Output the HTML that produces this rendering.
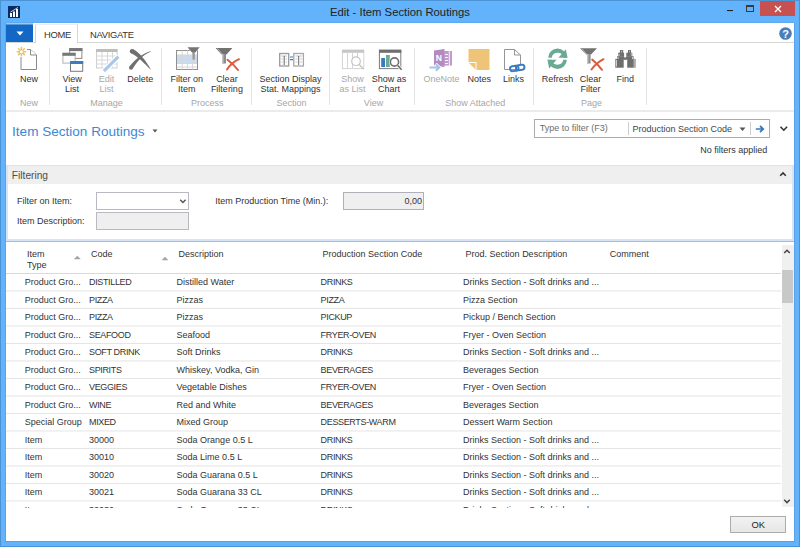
<!DOCTYPE html>
<html><head><meta charset="utf-8"><style>
html,body{margin:0;padding:0}
body{width:800px;height:547px;position:relative;overflow:hidden;background:#63B2FC;font-family:"Liberation Sans",sans-serif}
.t{position:absolute;white-space:nowrap;line-height:1}
.r{position:absolute}
</style></head><body>
<div class="r" style="left:0px;top:0px;width:800px;height:1px;background:#4C93D6"></div><div class="r" style="left:0px;top:0px;width:1px;height:547px;background:#4C93D6"></div><div class="r" style="left:799px;top:0px;width:1px;height:547px;background:#4C93D6"></div><div class="r" style="left:0px;top:546px;width:800px;height:1px;background:#4C93D6"></div><svg class="r" style="left:8px;top:5.5px" width="12" height="12" viewBox="0 0 12 12"><rect width="12" height="12" fill="#0B2A5E"/><rect x="2" y="7" width="2" height="4" fill="#fff"/><rect x="5" y="5.5" width="2" height="5.5" fill="#fff"/><rect x="8" y="3" width="2" height="8" fill="#fff"/><path d="M2.5 6 L6 4 L9 2 L10 1.5" stroke="#fff" stroke-width="0.8" fill="none"/></svg><div class="t" style="left:250.00px;width:300px;text-align:center;top:7.00px;font-size:11.3px;color:#222;">Edit - Item Section Routings</div><div class="r" style="left:727px;top:10px;width:6px;height:1px;background:#222"></div><div class="r" style="left:727px;top:11px;width:6px;height:1px;background:#7a9ccc"></div><div class="r" style="left:746px;top:5px;width:8px;height:7px;border:1px solid #3a3a3a;border-top-width:2px;box-sizing:border-box"></div><div class="r" style="left:760px;top:1px;width:35px;height:15px;background:#C75050"></div><svg class="r" style="left:772px;top:3px" width="12" height="12" viewBox="0 0 12 12"><path d="M3 3 L9 9 M9 3 L3 9" stroke="#fff" stroke-width="1.4"/></svg><div class="r" style="left:6px;top:23px;width:788px;height:518px;background:#fff"></div><div class="r" style="left:6px;top:23px;width:27px;height:1px;background:#A2C7EA"></div><div class="r" style="left:6px;top:24px;width:27px;height:1px;background:#5A97D6"></div><div class="r" style="left:6px;top:25px;width:27px;height:17px;background:#1268C4"></div><div class="r" style="left:5px;top:23px;width:1px;height:518px;background:#58A3EC"></div><div class="r" style="left:794px;top:23px;width:1px;height:518px;background:#58A3EC"></div><div class="r" style="left:6px;top:22px;width:788px;height:1px;background:#5DAAF0"></div><div class="r" style="left:5px;top:541px;width:790px;height:1px;background:#55A0E8"></div><svg class="r" style="left:16px;top:31px" width="8" height="5" viewBox="0 0 8 5"><path d="M0.5 0.5 L7.5 0.5 L4 4.5 Z" fill="#fff"/></svg><div class="r" style="left:6px;top:42px;width:788px;height:1px;background:#D6D6D6"></div><div class="r" style="left:35px;top:24px;width:43px;height:19px;background:#fff;border:1px solid #D6D6D6;border-top-color:#EDEDED;border-bottom:none;box-sizing:border-box"></div><div class="t" style="left:44.00px;top:30.00px;font-size:9.4px;color:#333;letter-spacing:-0.25px">HOME</div><div class="t" style="left:90.00px;top:30.00px;font-size:9.4px;color:#333;letter-spacing:-0.3px">NAVIGATE</div><svg class="r" style="left:779px;top:27px" width="13" height="13" viewBox="0 0 13 13"><circle cx="6.5" cy="6.5" r="6.3" fill="#4A7EB8"/><text x="6.5" y="10.6" font-family="Liberation Sans" font-weight="bold" font-size="11" fill="#fff" text-anchor="middle">?</text></svg><div class="r" style="left:6px;top:110px;width:788px;height:2px;background:#EBEBEB"></div><div class="r" style="left:49px;top:48px;width:1px;height:57px;background:#E3E3E3"></div><div class="r" style="left:161px;top:48px;width:1px;height:57px;background:#E3E3E3"></div><div class="r" style="left:251px;top:48px;width:1px;height:57px;background:#E3E3E3"></div><div class="r" style="left:329px;top:48px;width:1px;height:57px;background:#E3E3E3"></div><div class="r" style="left:414px;top:48px;width:1px;height:57px;background:#E3E3E3"></div><div class="r" style="left:533px;top:48px;width:1px;height:57px;background:#E3E3E3"></div><div class="r" style="left:646px;top:48px;width:1px;height:57px;background:#E3E3E3"></div><div class="t" style="left:-10.90px;width:80px;text-align:center;top:75.00px;font-size:9px;color:#333;">New</div><div class="t" style="left:32.10px;width:80px;text-align:center;top:75.00px;font-size:9px;color:#333;">View</div><div class="t" style="left:32.10px;width:80px;text-align:center;top:85.00px;font-size:9px;color:#333;">List</div><div class="t" style="left:66.60px;width:80px;text-align:center;top:75.00px;font-size:9px;color:#A8A8A8;">Edit</div><div class="t" style="left:66.60px;width:80px;text-align:center;top:85.00px;font-size:9px;color:#A8A8A8;">List</div><div class="t" style="left:100.20px;width:80px;text-align:center;top:75.00px;font-size:9px;color:#333;">Delete</div><div class="t" style="left:146.75px;width:80px;text-align:center;top:75.00px;font-size:9px;color:#333;">Filter on</div><div class="t" style="left:146.75px;width:80px;text-align:center;top:85.00px;font-size:9px;color:#333;">Item</div><div class="t" style="left:186.90px;width:80px;text-align:center;top:75.00px;font-size:9px;color:#333;">Clear</div><div class="t" style="left:186.90px;width:80px;text-align:center;top:85.00px;font-size:9px;color:#333;">Filtering</div><div class="t" style="left:250.50px;width:80px;text-align:center;top:75.00px;font-size:9px;color:#333;">Section Display</div><div class="t" style="left:250.50px;width:80px;text-align:center;top:85.00px;font-size:9px;color:#333;">Stat. Mappings</div><div class="t" style="left:312.50px;width:80px;text-align:center;top:75.00px;font-size:9px;color:#A8A8A8;">Show</div><div class="t" style="left:312.50px;width:80px;text-align:center;top:85.00px;font-size:9px;color:#A8A8A8;">as List</div><div class="t" style="left:349.10px;width:80px;text-align:center;top:75.00px;font-size:9px;color:#333;">Show as</div><div class="t" style="left:349.10px;width:80px;text-align:center;top:85.00px;font-size:9px;color:#333;">Chart</div><div class="t" style="left:401.50px;width:80px;text-align:center;top:75.00px;font-size:9px;color:#A8A8A8;">OneNote</div><div class="t" style="left:439.30px;width:80px;text-align:center;top:75.00px;font-size:9px;color:#333;">Notes</div><div class="t" style="left:473.50px;width:80px;text-align:center;top:75.00px;font-size:9px;color:#333;">Links</div><div class="t" style="left:517.50px;width:80px;text-align:center;top:75.00px;font-size:9px;color:#333;">Refresh</div><div class="t" style="left:550.60px;width:80px;text-align:center;top:75.00px;font-size:9px;color:#333;">Clear</div><div class="t" style="left:550.60px;width:80px;text-align:center;top:85.00px;font-size:9px;color:#333;">Filter</div><div class="t" style="left:585.30px;width:80px;text-align:center;top:75.00px;font-size:9px;color:#333;">Find</div><div class="t" style="left:-15.90px;width:90px;text-align:center;top:99.00px;font-size:9px;color:#A6A6A6;">New</div><div class="t" style="left:61.50px;width:90px;text-align:center;top:99.00px;font-size:9px;color:#A6A6A6;">Manage</div><div class="t" style="left:162.30px;width:90px;text-align:center;top:99.00px;font-size:9px;color:#A6A6A6;">Process</div><div class="t" style="left:246.50px;width:90px;text-align:center;top:99.00px;font-size:9px;color:#A6A6A6;">Section</div><div class="t" style="left:328.50px;width:90px;text-align:center;top:99.00px;font-size:9px;color:#A6A6A6;">View</div><div class="t" style="left:430.30px;width:90px;text-align:center;top:99.00px;font-size:9px;color:#A6A6A6;">Show Attached</div><div class="t" style="left:546.40px;width:90px;text-align:center;top:99.00px;font-size:9px;color:#A6A6A6;">Page</div><svg class="r" style="left:16px;top:46px" width="22" height="25" viewBox="0 0 22 25"><path d="M5 3.5 H14.5 L20.5 9 V23.5 H5 Z" fill="#fff" stroke="#8a8a8a" stroke-width="1"/><path d="M14.5 3.5 V9 H20.5" fill="#fff" stroke="#8a8a8a" stroke-width="1"/><rect x="0" y="0" width="11" height="11" fill="#fff"/><g stroke="#EBC060" stroke-width="1.5" stroke-linecap="round"><path d="M5.4 1.6 V9.8 M1.3 5.7 H9.5 M2.5 2.8 L8.3 8.6 M8.3 2.8 L2.5 8.6"/></g><circle cx="5.4" cy="5.7" r="1.5" fill="#fff"/></svg><svg class="r" style="left:60px;top:46px" width="26" height="28" viewBox="0 0 26 28"><rect x="9.7" y="2.6" width="12.2" height="9.8" fill="#fff" stroke="#8a8a8a"/><rect x="9.2" y="2.1" width="13.2" height="3" fill="#777"/><rect x="2.9" y="7.3" width="12.2" height="9.8" fill="#fff" stroke="#b0b0b0"/><rect x="2.4" y="6.8" width="13.2" height="3" fill="#777"/><rect x="10.5" y="15.5" width="12.2" height="9.8" fill="#fff" stroke="#7a7a7a"/><rect x="10" y="15" width="13.2" height="3" fill="#3F7BBE"/></svg><svg class="r" style="left:94px;top:47px" width="27" height="27" viewBox="0 0 27 27"><rect x="2.5" y="2.5" width="20.5" height="18.5" fill="#fff" stroke="#cfcfcf"/><rect x="2" y="2" width="21.5" height="3" fill="#BDBDBD"/><path d="M2.5 9 H23 M2.5 13 H23 M2.5 17 H23 M8 5 V21 M13.5 5 V21 M18.5 5 V21" stroke="#d8d8d8" stroke-width="1" fill="none"/><path d="M10 24 L24.5 9.5" stroke="#fff" stroke-width="5.5"/><path d="M9.8 24.2 L24.3 9.7" stroke="#A9C8E8" stroke-width="3.2"/><path d="M9.1 23.4 L10.6 24.9 L8.6 25.6 Z" fill="#fff"/></svg><svg class="r" style="left:126px;top:46px" width="30" height="26" viewBox="0 0 30 26"><path d="M5.09 7.20 L5.62 7.46 L6.18 7.75 L6.76 8.08 L7.37 8.44 L8.00 8.84 L8.65 9.28 L9.33 9.75 L10.03 10.26 L10.75 10.81 L11.50 11.39 L12.27 12.01 L13.06 12.67 L13.87 13.36 L14.71 14.10 L15.57 14.87 L16.45 15.67 L17.35 16.52 L18.28 17.40 L19.23 18.31 L20.20 19.27 L21.19 20.26 L22.20 21.28 L23.24 22.35 L24.30 23.45 L24.70 23.15 L23.91 21.83 L23.13 20.56 L22.35 19.32 L21.58 18.13 L20.81 16.99 L20.05 15.88 L19.29 14.82 L18.53 13.79 L17.78 12.82 L17.03 11.88 L16.28 10.98 L15.54 10.13 L14.80 9.32 L14.07 8.55 L13.34 7.83 L12.62 7.14 L11.89 6.50 L11.17 5.90 L10.46 5.34 L9.74 4.83 L9.03 4.35 L8.32 3.93 L7.62 3.54 L6.91 3.20 Z" fill="#707070"/><circle cx="6" cy="5.2" r="2.2" fill="#707070"/><path d="M24.71 5.21 L23.80 5.48 L22.89 5.77 L21.99 6.09 L21.08 6.45 L20.17 6.83 L19.27 7.24 L18.37 7.69 L17.46 8.17 L16.56 8.69 L15.66 9.23 L14.77 9.82 L13.87 10.43 L12.98 11.09 L12.09 11.77 L11.20 12.49 L10.32 13.25 L9.44 14.04 L8.56 14.86 L7.69 15.72 L6.81 16.62 L5.95 17.55 L5.08 18.51 L4.22 19.51 L3.37 20.55 L6.63 22.85 L7.30 21.77 L7.97 20.72 L8.65 19.70 L9.34 18.71 L10.04 17.76 L10.74 16.84 L11.45 15.94 L12.17 15.09 L12.90 14.26 L13.63 13.46 L14.37 12.70 L15.13 11.97 L15.89 11.27 L16.66 10.60 L17.44 9.96 L18.23 9.36 L19.02 8.79 L19.83 8.26 L20.65 7.76 L21.48 7.29 L22.31 6.86 L23.16 6.46 L24.02 6.10 L24.89 5.79 Z" fill="#707070"/><circle cx="5" cy="21.7" r="2" fill="#707070"/></svg><svg class="r" style="left:174px;top:45px" width="28" height="27" viewBox="0 0 28 27"><rect x="2.5" y="5.5" width="21" height="19" fill="#fff" stroke="#8f8f8f"/><rect x="3" y="10" width="20" height="8.5" fill="#C9DCF0"/><path d="M3 10 H23 M3 14.2 H23 M3 18.5 H23 M3 22 H23 M8.2 5.5 V24.5 M13.4 5.5 V24.5 M18.6 5.5 V24.5" stroke="#d6d6d6" stroke-width="1"/><path d="M13 2 H26 L21 8.5 V14.5 H18 V8.5 Z" fill="#fff"/><path d="M13.5 2.3 H25.7 L21 7.8 H18.2 Z" fill="#747474"/><rect x="18.3" y="7.5" width="2.6" height="7.2" fill="#9a9a9a"/></svg><svg class="r" style="left:214px;top:46px" width="28" height="26" viewBox="0 0 28 26"><path d="M1.6 2 H18.4 L12.5 8.5 H7.5 Z" fill="#727272"/><path d="M3.5 2.5 L8.5 8.5" stroke="#bdbdbd" stroke-width="0.8"/><rect x="8" y="8" width="4" height="9.5" fill="#8e8e8e"/><rect x="8" y="8" width="1.5" height="9.5" fill="#c4c4c4"/><path d="M13 23.5 C16 19 20 15.5 25 13.2 M13.5 13.8 C17 16.5 21 20 24 24" stroke="#DA5B3E" stroke-width="2" fill="none" stroke-linecap="round"/></svg><svg class="r" style="left:277px;top:51px" width="30" height="17" viewBox="0 0 30 17"><rect x="2.7" y="2.5" width="9" height="12.5" fill="#fff" stroke="#9a9a9a" stroke-width="1.3"/><rect x="16.8" y="2.5" width="9.6" height="12.5" fill="#fff" stroke="#a8a8a8" stroke-width="1.3"/><path d="M4.3 5 H10 M18.5 5 H25" stroke="#bbb" stroke-width="0.9"/><path d="M7.2 5 V14 M21.7 5 V14" stroke="#666" stroke-width="1"/><path d="M4.3 8 H6 M8.5 8 H10 M18.5 8 H20.5 M23 8 H25 M4.3 11 H6 M8.5 11 H10 M18.5 11 H20.5 M23 11 H25" stroke="#bbb" stroke-width="0.8"/><path d="M13 6 H16 M13 8.6 H16" stroke="#3B7DC4" stroke-width="1.2"/></svg><svg class="r" style="left:340px;top:48px" width="27" height="24" viewBox="0 0 27 24"><rect x="2.4" y="2.2" width="21.4" height="18.4" fill="#fff" stroke="#d4d4d4"/><rect x="2" y="1.8" width="22" height="3" fill="#C6C6C6"/><path d="M7.5 4.5 V20.5 M12.5 4.5 V20.5 M17.5 4.5 V13" stroke="#d4d4d4"/><circle cx="16" cy="13.2" r="4.3" fill="#fff" stroke="#c4c4c4" stroke-width="1.2"/><path d="M19.2 16.5 L23.5 21" stroke="#c4c4c4" stroke-width="1.4"/></svg><svg class="r" style="left:377px;top:48px" width="27" height="25" viewBox="0 0 27 25"><rect x="2.4" y="2.2" width="21.4" height="18.4" fill="#fff" stroke="#7c7c7c"/><rect x="2" y="1.8" width="22.3" height="3" fill="#6f6f6f"/><rect x="4.2" y="10" width="3.8" height="9" fill="#3D79BE"/><rect x="9" y="7" width="3.8" height="12" fill="#6BAA94"/><circle cx="17.5" cy="14" r="5.3" fill="#fff"/><circle cx="17.5" cy="14" r="4.1" fill="#fff" stroke="#707070" stroke-width="1.6"/><path d="M20.6 17.3 L24.6 21.8" stroke="#fff" stroke-width="3"/><path d="M20.6 17.3 L24.6 21.8" stroke="#707070" stroke-width="1.7"/></svg><svg class="r" style="left:428px;top:47px" width="27" height="26" viewBox="0 0 27 26"><path d="M6 3.6 L16.5 2 V20 L6 18.5 Z" fill="#B48AC1"/><rect x="16" y="4" width="8" height="14.5" fill="#BE9BCB"/><path d="M17 7.5 H20 M17 10.5 H20 M17 13.5 H20 M17 16.5 H20 M21.3 4 V18.5" stroke="#fff" stroke-width="0.9"/><text x="10.8" y="13.6" font-family="Liberation Sans" font-weight="bold" font-size="8.6" fill="#fff" text-anchor="middle">N</text><path d="M1.5 20.5 H11 M7.5 17 L11.2 20.5 L7.5 24" stroke="#fff" stroke-width="3.5" fill="none"/><path d="M1.5 20.5 H11 M7.8 17.3 L11.2 20.5 L7.8 23.7" stroke="#A3C5E5" stroke-width="2" fill="none"/></svg><svg class="r" style="left:466px;top:47px" width="26" height="25" viewBox="0 0 26 25"><path d="M2.5 2 H23.5 V23 H10.5 L2.5 15 Z" fill="#EEC479"/><path d="M2.5 15.5 H10 V23 Z" fill="#EEC479"/><path d="M2.5 15.5 H10 V23" stroke="#fff" stroke-width="1" fill="none"/></svg><svg class="r" style="left:502px;top:47px" width="25" height="26" viewBox="0 0 25 26"><path d="M2.5 2.5 H12.5 L18.5 8 V22.5 H2.5 Z" fill="#fff" stroke="#959595"/><path d="M12.5 2.5 V8 H18.5" fill="none" stroke="#959595"/><rect x="16" y="17" width="8" height="7" fill="#fff"/><g transform="rotate(-7 15 21)"><rect x="8" y="18.6" width="8.5" height="5" rx="2.5" fill="none" stroke="#3D7CC1" stroke-width="2"/><rect x="14" y="18.4" width="8.5" height="5" rx="2.5" fill="none" stroke="#3D7CC1" stroke-width="2"/></g></svg><svg class="r" style="left:544px;top:46px" width="28" height="26" viewBox="0 0 28 26"><path d="M4.2 11.7 A9.3 9.3 0 0 1 22.8 11.7 L19.5 11.7 A6 6 0 0 0 7.7 11.7 Z" fill="#6AAA94"/><path d="M21.8 3.2 L23.6 11.7 H14.5 Z" fill="#6AAA94"/><path d="M22.8 13.8 A9.3 9.3 0 0 1 4.2 13.8 L7.5 13.8 A6 6 0 0 0 19.3 13.8 Z" fill="#6AAA94"/><path d="M5.2 22.6 L3.4 13.8 H12.5 Z" fill="#6AAA94"/></svg><svg class="r" style="left:578px;top:46px" width="28" height="26" viewBox="0 0 28 26"><path d="M2 2.2 H19 L13 8.5 H8.5 Z" fill="#727272"/><path d="M4 2.8 L9 8.5" stroke="#bdbdbd" stroke-width="0.8"/><rect x="9" y="8" width="3.6" height="9.5" fill="#8e8e8e"/><rect x="9" y="8" width="1.4" height="9.5" fill="#c4c4c4"/><path d="M13.5 23.5 C16.5 19.5 20 16 25.5 13.2 M14.2 13.6 C17.5 16.5 21 20 24 23.8" stroke="#DA5B3E" stroke-width="2" fill="none" stroke-linecap="round"/></svg><svg class="r" style="left:612px;top:46px" width="28" height="26" viewBox="0 0 28 26"><g fill="#6e6e6e"><rect x="7.9" y="4" width="3.3" height="5"/><rect x="6.2" y="6.7" width="5.9" height="3.8"/><rect x="5.1" y="10.2" width="7" height="3"/><rect x="3.3" y="12.9" width="8.4" height="8.8"/><rect x="16" y="4" width="3" height="5"/><rect x="14.3" y="6.7" width="6" height="3.8"/><rect x="14.3" y="10.2" width="7.3" height="3"/><rect x="15.2" y="12.9" width="8.6" height="8.8"/><rect x="11.5" y="11.4" width="3.5" height="2.4"/></g><g fill="#fff" fill-opacity="0.75"><rect x="3.9" y="14" width="1" height="6.5"/><rect x="6.6" y="8" width="0.9" height="2"/><rect x="5.6" y="11" width="0.9" height="2"/><rect x="9.3" y="4.8" width="0.7" height="1.6"/><rect x="17.2" y="4.8" width="0.7" height="1.6"/><rect x="20" y="11" width="0.9" height="2"/></g><rect x="21.5" y="13" width="2.3" height="8.7" fill="#fff" fill-opacity="0.45"/><rect x="18.8" y="7" width="1.5" height="3" fill="#fff" fill-opacity="0.4"/></svg><div class="t" style="left:12.10px;top:125.00px;font-size:13.55px;color:#3B88D5;">Item Section Routings</div><svg class="r" style="left:152px;top:129px" width="6" height="4" viewBox="0 0 6 4"><path d="M0.5 0.5 H5.5 L3 3.5 Z" fill="#555"/></svg><div class="r" style="left:534px;top:119px;width:236px;height:19px;border:1px solid #ABABAB;box-sizing:border-box;background:#fff"></div><div class="t" style="left:539.70px;top:124.00px;font-size:9px;color:#6D6D6D;">Type to filter (F3)</div><div class="r" style="left:628px;top:122px;width:1px;height:13px;background:#CFCFCF"></div><div class="t" style="left:632.40px;top:125.00px;font-size:9px;color:#444;">Production Section Code</div><svg class="r" style="left:739px;top:127px" width="7" height="5" viewBox="0 0 7 5"><path d="M0.5 0.5 H6.5 L3.5 4 Z" fill="#555"/></svg><div class="r" style="left:750px;top:122px;width:1px;height:13px;background:#CFCFCF"></div><svg class="r" style="left:755px;top:125px" width="10" height="8" viewBox="0 0 10 8"><path d="M0.8 4 H8 M5 1 L8.3 4 L5 7" stroke="#3A78BE" stroke-width="1.7" fill="none"/></svg><svg class="r" style="left:779px;top:125px" width="10" height="8" viewBox="0 0 10 8"><path d="M1.5 1.8 L4.8 5.2 L8.1 1.8" stroke="#333" stroke-width="1.6" fill="none"/></svg><div class="t" style="left:647.40px;width:120px;text-align:right;top:146.00px;font-size:9px;color:#333;">No filters applied</div><div class="r" style="left:6px;top:165px;width:788px;height:76px;border:1px solid #D6E4F8;border-left-width:2px;border-right-width:2px;border-bottom-width:2px;box-sizing:border-box"></div><div class="r" style="left:6px;top:241px;width:788px;height:1px;background:#B4B9C2"></div><div class="r" style="left:8px;top:166px;width:784px;height:18px;background:#EFEFEF"></div><div class="t" style="left:11.80px;top:171.00px;font-size:10.2px;color:#4D4D4D;">Filtering</div><svg class="r" style="left:779px;top:171px" width="8" height="6" viewBox="0 0 8 6"><path d="M1.2 4.8 L4 2 L6.8 4.8" stroke="#333" stroke-width="1.6" fill="none"/></svg><div class="t" style="left:17.00px;top:197.00px;font-size:9px;color:#333;">Filter on Item:</div><div class="t" style="left:17.00px;top:217.00px;font-size:9px;color:#333;">Item Description:</div><div class="r" style="left:96px;top:192px;width:93px;height:18px;border:1px solid #B9B9C1;box-sizing:border-box;background:#fff"></div><svg class="r" style="left:179px;top:198px" width="8" height="7" viewBox="0 0 8 7"><path d="M1.2 1.8 L3.9 4.5 L6.6 1.8" stroke="#555" stroke-width="1.5" fill="none"/></svg><div class="r" style="left:96px;top:212px;width:93px;height:18px;border:1px solid #B9B9C1;box-sizing:border-box;background:#EFEFEF"></div><div class="t" style="left:215.20px;top:197.00px;font-size:9px;color:#333;">Item Production Time (Min.):</div><div class="r" style="left:343px;top:192px;width:81px;height:18px;border:1px solid #B0B0B8;box-sizing:border-box;background:#EFEFEF"></div><div class="t" style="left:362.00px;width:60px;text-align:right;top:197.00px;font-size:9px;color:#333;">0,00</div><div class="t" style="left:26.90px;top:250.00px;font-size:9px;color:#333;">Item</div><div class="t" style="left:91.00px;top:250.00px;font-size:9px;color:#333;">Code</div><div class="t" style="left:178.60px;top:250.00px;font-size:9px;color:#333;">Description</div><div class="t" style="left:322.60px;top:250.00px;font-size:9px;color:#333;">Production Section Code</div><div class="t" style="left:465.60px;top:250.00px;font-size:9px;color:#333;">Prod. Section Description</div><div class="t" style="left:609.80px;top:250.00px;font-size:9px;color:#333;">Comment</div><div class="t" style="left:26.90px;top:261.00px;font-size:9px;color:#333;">Type</div><svg class="r" style="left:73px;top:255px" width="9" height="5" viewBox="0 0 9 5"><path d="M0.8 4.3 H7.8 L4.3 0.8 Z" fill="#A4A4A4"/></svg><svg class="r" style="left:161px;top:256px" width="8" height="5" viewBox="0 0 8 5"><path d="M0.6 4.3 H7.4 L4 0.8 Z" fill="#A4A4A4"/></svg><div class="r" style="left:6px;top:273px;width:775px;height:1px;background:#D9D9D9"></div><div class="r" style="left:6px;top:274px;width:776px;height:233.5px;overflow:hidden"><div class="t" style="left:18.75px;top:4.00px;font-size:9px;color:#333;">Product Gro...</div><div class="t" style="left:83.00px;top:4.00px;font-size:9px;color:#333;letter-spacing:-0.35px">DISTILLED</div><div class="t" style="left:170.60px;top:4.00px;font-size:9px;color:#333;">Distilled Water</div><div class="t" style="left:314.60px;top:4.00px;font-size:9px;color:#333;letter-spacing:-0.35px">DRINKS</div><div class="t" style="left:456.90px;top:4.00px;font-size:9px;color:#333;">Drinks Section - Soft drinks and ...</div><div class="t" style="left:18.75px;top:22.00px;font-size:9px;color:#333;">Product Gro...</div><div class="t" style="left:83.00px;top:22.00px;font-size:9px;color:#333;letter-spacing:-0.35px">PIZZA</div><div class="t" style="left:170.60px;top:22.00px;font-size:9px;color:#333;">Pizzas</div><div class="t" style="left:314.60px;top:22.00px;font-size:9px;color:#333;letter-spacing:-0.35px">PIZZA</div><div class="t" style="left:456.90px;top:22.00px;font-size:9px;color:#333;">Pizza Section</div><div class="t" style="left:18.75px;top:39.00px;font-size:9px;color:#333;">Product Gro...</div><div class="t" style="left:83.00px;top:39.00px;font-size:9px;color:#333;letter-spacing:-0.35px">PIZZA</div><div class="t" style="left:170.60px;top:39.00px;font-size:9px;color:#333;">Pizzas</div><div class="t" style="left:314.60px;top:39.00px;font-size:9px;color:#333;letter-spacing:-0.35px">PICKUP</div><div class="t" style="left:456.90px;top:39.00px;font-size:9px;color:#333;">Pickup / Bench Section</div><div class="t" style="left:18.75px;top:57.00px;font-size:9px;color:#333;">Product Gro...</div><div class="t" style="left:83.00px;top:57.00px;font-size:9px;color:#333;letter-spacing:-0.35px">SEAFOOD</div><div class="t" style="left:170.60px;top:57.00px;font-size:9px;color:#333;">Seafood</div><div class="t" style="left:314.60px;top:57.00px;font-size:9px;color:#333;letter-spacing:-0.35px">FRYER-OVEN</div><div class="t" style="left:456.90px;top:57.00px;font-size:9px;color:#333;">Fryer - Oven Section</div><div class="t" style="left:18.75px;top:74.00px;font-size:9px;color:#333;">Product Gro...</div><div class="t" style="left:83.00px;top:74.00px;font-size:9px;color:#333;letter-spacing:-0.35px">SOFT DRINK</div><div class="t" style="left:170.60px;top:74.00px;font-size:9px;color:#333;">Soft Drinks</div><div class="t" style="left:314.60px;top:74.00px;font-size:9px;color:#333;letter-spacing:-0.35px">DRINKS</div><div class="t" style="left:456.90px;top:74.00px;font-size:9px;color:#333;">Drinks Section - Soft drinks and ...</div><div class="t" style="left:18.75px;top:92.00px;font-size:9px;color:#333;">Product Gro...</div><div class="t" style="left:83.00px;top:92.00px;font-size:9px;color:#333;letter-spacing:-0.35px">SPIRITS</div><div class="t" style="left:170.60px;top:92.00px;font-size:9px;color:#333;">Whiskey, Vodka, Gin</div><div class="t" style="left:314.60px;top:92.00px;font-size:9px;color:#333;letter-spacing:-0.35px">BEVERAGES</div><div class="t" style="left:456.90px;top:92.00px;font-size:9px;color:#333;">Beverages Section</div><div class="t" style="left:18.75px;top:109.00px;font-size:9px;color:#333;">Product Gro...</div><div class="t" style="left:83.00px;top:109.00px;font-size:9px;color:#333;letter-spacing:-0.35px">VEGGIES</div><div class="t" style="left:170.60px;top:109.00px;font-size:9px;color:#333;">Vegetable Dishes</div><div class="t" style="left:314.60px;top:109.00px;font-size:9px;color:#333;letter-spacing:-0.35px">FRYER-OVEN</div><div class="t" style="left:456.90px;top:109.00px;font-size:9px;color:#333;">Fryer - Oven Section</div><div class="t" style="left:18.75px;top:127.00px;font-size:9px;color:#333;">Product Gro...</div><div class="t" style="left:83.00px;top:127.00px;font-size:9px;color:#333;letter-spacing:-0.35px">WINE</div><div class="t" style="left:170.60px;top:127.00px;font-size:9px;color:#333;">Red and White</div><div class="t" style="left:314.60px;top:127.00px;font-size:9px;color:#333;letter-spacing:-0.35px">BEVERAGES</div><div class="t" style="left:456.90px;top:127.00px;font-size:9px;color:#333;">Beverages Section</div><div class="t" style="left:18.75px;top:144.00px;font-size:9px;color:#333;">Special Group</div><div class="t" style="left:83.00px;top:144.00px;font-size:9px;color:#333;letter-spacing:-0.35px">MIXED</div><div class="t" style="left:170.60px;top:144.00px;font-size:9px;color:#333;">Mixed Group</div><div class="t" style="left:314.60px;top:144.00px;font-size:9px;color:#333;letter-spacing:-0.35px">DESSERTS-WARM</div><div class="t" style="left:456.90px;top:144.00px;font-size:9px;color:#333;">Dessert Warm Section</div><div class="t" style="left:18.75px;top:162.00px;font-size:9px;color:#333;">Item</div><div class="t" style="left:83.00px;top:162.00px;font-size:9px;color:#333;">30000</div><div class="t" style="left:170.60px;top:162.00px;font-size:9px;color:#333;">Soda Orange 0.5 L</div><div class="t" style="left:314.60px;top:162.00px;font-size:9px;color:#333;letter-spacing:-0.35px">DRINKS</div><div class="t" style="left:456.90px;top:162.00px;font-size:9px;color:#333;">Drinks Section - Soft drinks and ...</div><div class="t" style="left:18.75px;top:179.00px;font-size:9px;color:#333;">Item</div><div class="t" style="left:83.00px;top:179.00px;font-size:9px;color:#333;">30010</div><div class="t" style="left:170.60px;top:179.00px;font-size:9px;color:#333;">Soda Lime 0.5 L</div><div class="t" style="left:314.60px;top:179.00px;font-size:9px;color:#333;letter-spacing:-0.35px">DRINKS</div><div class="t" style="left:456.90px;top:179.00px;font-size:9px;color:#333;">Drinks Section - Soft drinks and ...</div><div class="t" style="left:18.75px;top:197.00px;font-size:9px;color:#333;">Item</div><div class="t" style="left:83.00px;top:197.00px;font-size:9px;color:#333;">30020</div><div class="t" style="left:170.60px;top:197.00px;font-size:9px;color:#333;">Soda Guarana 0.5 L</div><div class="t" style="left:314.60px;top:197.00px;font-size:9px;color:#333;letter-spacing:-0.35px">DRINKS</div><div class="t" style="left:456.90px;top:197.00px;font-size:9px;color:#333;">Drinks Section - Soft drinks and ...</div><div class="t" style="left:18.75px;top:214.00px;font-size:9px;color:#333;">Item</div><div class="t" style="left:83.00px;top:214.00px;font-size:9px;color:#333;">30021</div><div class="t" style="left:170.60px;top:214.00px;font-size:9px;color:#333;">Soda Guarana 33 CL</div><div class="t" style="left:314.60px;top:214.00px;font-size:9px;color:#333;letter-spacing:-0.35px">DRINKS</div><div class="t" style="left:456.90px;top:214.00px;font-size:9px;color:#333;">Drinks Section - Soft drinks and ...</div><div class="t" style="left:18.75px;top:232.00px;font-size:9px;color:#333;">Item</div><div class="t" style="left:83.00px;top:232.00px;font-size:9px;color:#333;">30030</div><div class="t" style="left:170.60px;top:232.00px;font-size:9px;color:#333;">Soda Guarana 33 CL</div><div class="t" style="left:314.60px;top:232.00px;font-size:9px;color:#333;letter-spacing:-0.35px">DRINKS</div><div class="t" style="left:456.90px;top:232.00px;font-size:9px;color:#333;">Drinks Section - Soft drinks and ...</div></div><svg class="r" style="left:6px;top:274px" width="776" height="240" viewBox="0 0 776 240"><line x1="0" x2="775" y1="16.95" y2="16.95" stroke="#E4E4E4" stroke-width="1"/><line x1="0" x2="775" y1="34.45" y2="34.45" stroke="#E4E4E4" stroke-width="1"/><line x1="0" x2="775" y1="51.95" y2="51.95" stroke="#E4E4E4" stroke-width="1"/><line x1="0" x2="775" y1="69.45" y2="69.45" stroke="#E4E4E4" stroke-width="1"/><line x1="0" x2="775" y1="86.95" y2="86.95" stroke="#E4E4E4" stroke-width="1"/><line x1="0" x2="775" y1="104.45" y2="104.45" stroke="#E4E4E4" stroke-width="1"/><line x1="0" x2="775" y1="121.95" y2="121.95" stroke="#E4E4E4" stroke-width="1"/><line x1="0" x2="775" y1="139.45" y2="139.45" stroke="#E4E4E4" stroke-width="1"/><line x1="0" x2="775" y1="156.95" y2="156.95" stroke="#E4E4E4" stroke-width="1"/><line x1="0" x2="775" y1="174.45" y2="174.45" stroke="#E4E4E4" stroke-width="1"/><line x1="0" x2="775" y1="191.95" y2="191.95" stroke="#E4E4E4" stroke-width="1"/><line x1="0" x2="775" y1="209.45" y2="209.45" stroke="#E4E4E4" stroke-width="1"/><line x1="0" x2="775" y1="226.95" y2="226.95" stroke="#E4E4E4" stroke-width="1"/></svg><div class="r" style="left:782px;top:245px;width:12px;height:262px;background:#F0F0F0"></div><div class="r" style="left:782px;top:270px;width:11px;height:33px;background:#C8C8C8"></div><svg class="r" style="left:783px;top:248px" width="8" height="7" viewBox="0 0 8 7"><path d="M1.2 5 L4 2.2 L6.8 5" stroke="#444" stroke-width="1.5" fill="none"/></svg><svg class="r" style="left:783px;top:498px" width="8" height="7" viewBox="0 0 8 7"><path d="M1.2 1.8 L4 4.6 L6.8 1.8" stroke="#444" stroke-width="1.5" fill="none"/></svg><div class="r" style="left:730px;top:516px;width:56px;height:17px;border:1px solid #ACACAC;box-sizing:border-box;background:linear-gradient(#F2F2F2,#E6E6E6)"></div><div class="t" style="left:738.30px;width:40px;text-align:center;top:520.00px;font-size:9.4px;color:#222;">OK</div>
</body></html>
